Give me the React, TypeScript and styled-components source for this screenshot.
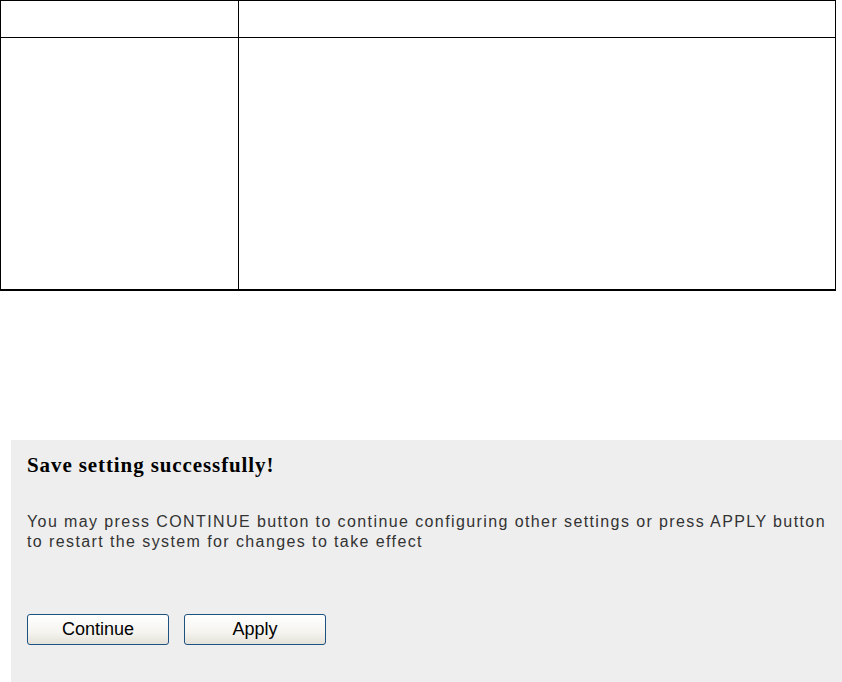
import React from 'react'
import styled, { createGlobalStyle } from 'styled-components'

const GlobalStyle = createGlobalStyle`
  html, body {
    margin: 0;
    padding: 0;
    background: #fff;
  }
  #root {
    width: 842px;
    height: 682px;
    overflow: hidden;
  }
`

const Page = styled.div`
  display: flex;
  flex-direction: column;
  height: 682px;
`

const Grid = styled.div`
  display: grid;
  grid-template-columns: 238px 1fr;
  grid-template-rows: 37px 1fr;
  width: 836px;
  height: 291px;
  box-sizing: border-box;
  border: 1px solid #000;
  border-bottom-width: 2px;
`

const Cell = styled.div<{ right?: boolean; bottom?: boolean }>`
  border-right: ${({ right }) => (right ? '1px solid #000' : 'none')};
  border-bottom: ${({ bottom }) => (bottom ? '1px solid #000' : 'none')};
`

const Panel = styled.div`
  margin: 149px 0 0 11px;
  flex: 1;
  background: #eeeeee;
  padding: 13px 10px 0 16px;
  display: flex;
  flex-direction: column;
`

const Title = styled.h3`
  margin: 0;
  font-family: 'Liberation Serif', 'Times New Roman', serif;
  font-weight: bold;
  font-size: 21px;
  letter-spacing: 0.9px;
  color: #000;
  line-height: 24px;
`

const Message = styled.p`
  margin: 35px 0 0 0;
  font-family: 'Liberation Sans', Arial, sans-serif;
  font-size: 16px;
  letter-spacing: 1.4px;
  line-height: 20px;
  color: #333;
`

const Actions = styled.div`
  display: flex;
  gap: 15px;
  margin-top: 62px;
`

const Button = styled.button`
  width: 142px;
  height: 31px;
  box-sizing: border-box;
  border: 1px solid #1c5180;
  border-radius: 3px;
  background: linear-gradient(#ffffff 0%, #f5f4ef 60%, #e3e1d8 100%);
  font-family: 'Liberation Sans', Arial, sans-serif;
  font-size: 18px;
  color: #000;
  padding: 0;
`

export default function App() {
  return (
    <Page>
      <GlobalStyle />
      <Grid>
        <Cell right bottom />
        <Cell bottom />
        <Cell right />
        <Cell />
      </Grid>
      <Panel>
        <Title>Save setting successfully!</Title>
        <Message>
          You may press CONTINUE button to continue configuring other settings or press APPLY button
          to restart the system for changes to take effect
        </Message>
        <Actions>
          <Button>Continue</Button>
          <Button>Apply</Button>
        </Actions>
      </Panel>
    </Page>
  )
}
